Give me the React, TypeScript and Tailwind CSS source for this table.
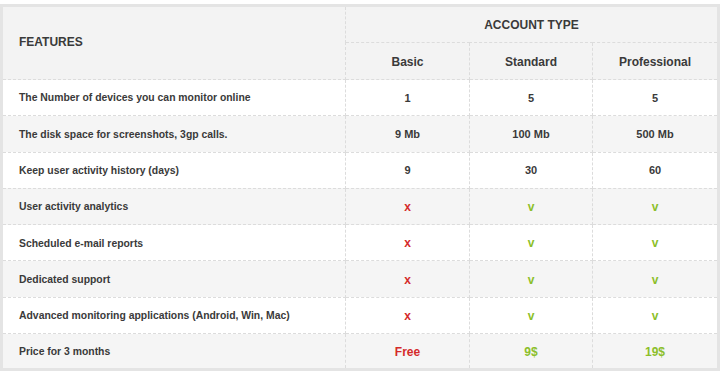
const rows: { label: string; values: string[]; kind?: 'flag' | 'price' }[] = [
  { label: 'The Number of devices you can monitor online', values: ['1', '5', '5'] },
  { label: 'The disk space for screenshots, 3gp calls.', values: ['9 Mb', '100 Mb', '500 Mb'] },
  { label: 'Keep user activity history (days)', values: ['9', '30', '60'] },
  { label: 'User activity analytics', values: ['x', 'v', 'v'], kind: 'flag' },
  { label: 'Scheduled e-mail reports', values: ['x', 'v', 'v'], kind: 'flag' },
  { label: 'Dedicated support', values: ['x', 'v', 'v'], kind: 'flag' },
  { label: 'Advanced monitoring applications (Android, Win, Mac)', values: ['x', 'v', 'v'], kind: 'flag' },
  { label: 'Price for 3 months', values: ['Free', '9$', '19$'], kind: 'price' },
];

function valueClass(kind: string | undefined, i: number) {
  if (!kind) return 'text-[11px] text-[#3a3a3a]';
  const color = i === 0 ? 'text-[#d42a2a]' : 'text-[#8cbf2b]';
  return `text-[12px] ${color}`;
}

export default function App() {
  return (
    <div className="w-[720px] h-[371px] bg-white pt-1 font-['Liberation_Sans',Arial,sans-serif]">
      <table className="w-full table-fixed border-collapse border-[3px] border-solid border-[#e4e4e4] font-bold">
        <colgroup>
          <col className="w-[344px]" />
          <col className="w-[124px]" />
          <col className="w-[123px]" />
          <col />
        </colgroup>
        <thead className="bg-[#f3f3f3]">
          <tr className="h-[37px]">
            <th
              rowSpan={2}
              className="border border-dashed border-[#dcdcdc] pl-[16px] pb-[3px] text-left text-[12px] text-[#3a3a3a]"
            >
              FEATURES
            </th>
            <th colSpan={3} className="border border-dashed border-[#dcdcdc] text-center text-[12px] text-[#3a3a3a]">
              ACCOUNT TYPE
            </th>
          </tr>
          <tr className="h-[37px]">
            {['Basic', 'Standard', 'Professional'].map((t) => (
              <th key={t} className="border border-dashed border-[#dcdcdc] pt-[2px] text-center text-[12px] text-[#3a3a3a]">
                {t}
              </th>
            ))}
          </tr>
        </thead>
        <tbody>
          {rows.map((r, idx) => (
            <tr key={r.label} className={idx % 2 === 0 ? 'h-[36.3px] bg-white' : 'h-[36.3px] bg-[#f5f5f5]'}>
              <td className="border border-dashed border-[#dcdcdc] pl-[16px] pt-[1px] text-[10.4px] text-[#3a3a3a]">{r.label}</td>
              {r.values.map((v, i) => (
                <td key={i} className={`border border-dashed border-[#dcdcdc] pt-[1px] text-center ${valueClass(r.kind, i)}`}>
                  {v}
                </td>
              ))}
            </tr>
          ))}
        </tbody>
      </table>
    </div>
  );
}
